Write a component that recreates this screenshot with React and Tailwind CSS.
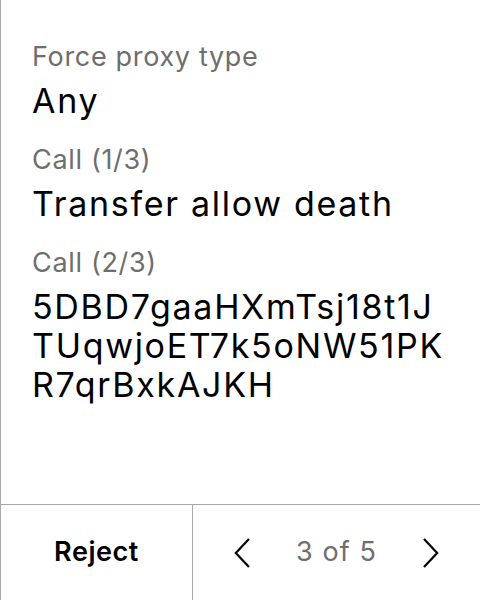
import React from "react";

function Label({ children }) {
  return (
    <div className="text-[27px] leading-[32px] tracking-[0.025em] text-[#6e6e6e]">{children}</div>
  );
}

function Value({ children }) {
  return (
    <div className="mt-[8px] text-[34px] leading-[40px] tracking-[0.05em] text-black">{children}</div>
  );
}

export default function App() {
  return (
    <div
      className="w-[480px] h-[600px] bg-white flex flex-col border-l border-[#a8a8a8]"
      style={{ fontFamily: "Inter, 'Noto Sans', sans-serif" }}
    >
      <div className="flex-1 flex flex-col gap-[23px] pl-[31px] pr-[24px] pt-[41px]">
        <div className="flex flex-col">
          <Label>Force proxy type</Label>
          <Value>Any</Value>
        </div>
        <div className="flex flex-col">
          <Label>Call (1/3)</Label>
          <Value>Transfer allow death</Value>
        </div>
        <div className="flex flex-col">
          <Label>Call (2/3)</Label>
          <div className="mt-[8px] text-[34px] leading-[39px] tracking-[0.05em] text-black">
            <div>5DBD7gaaHXmTsj18t1J</div>
            <div>TUqwjoET7k5oNW51PK</div>
            <div>R7qrBxkAJKH</div>
          </div>
        </div>
      </div>
      <div className="h-[96px] flex border-t border-[#a8a8a8]">
        <div className="w-[192px] flex items-center justify-center border-r border-[#a8a8a8] text-[27px] tracking-[0.02em] font-semibold text-black">
          Reject
        </div>
        <div className="flex-1 flex items-center justify-center gap-[46px]">
          <svg width="16" height="30" viewBox="0 0 16 30" fill="none" stroke="black" strokeWidth="2.2">
            <path d="M15 1 L1.8 15 L15 29" />
          </svg>
          <span className="text-[27px] tracking-[0.04em] text-[#6e6e6e]">3 of 5</span>
          <svg width="16" height="30" viewBox="0 0 16 30" fill="none" stroke="black" strokeWidth="2.2">
            <path d="M1 1 L14.2 15 L1 29" />
          </svg>
        </div>
      </div>
    </div>
  );
}
